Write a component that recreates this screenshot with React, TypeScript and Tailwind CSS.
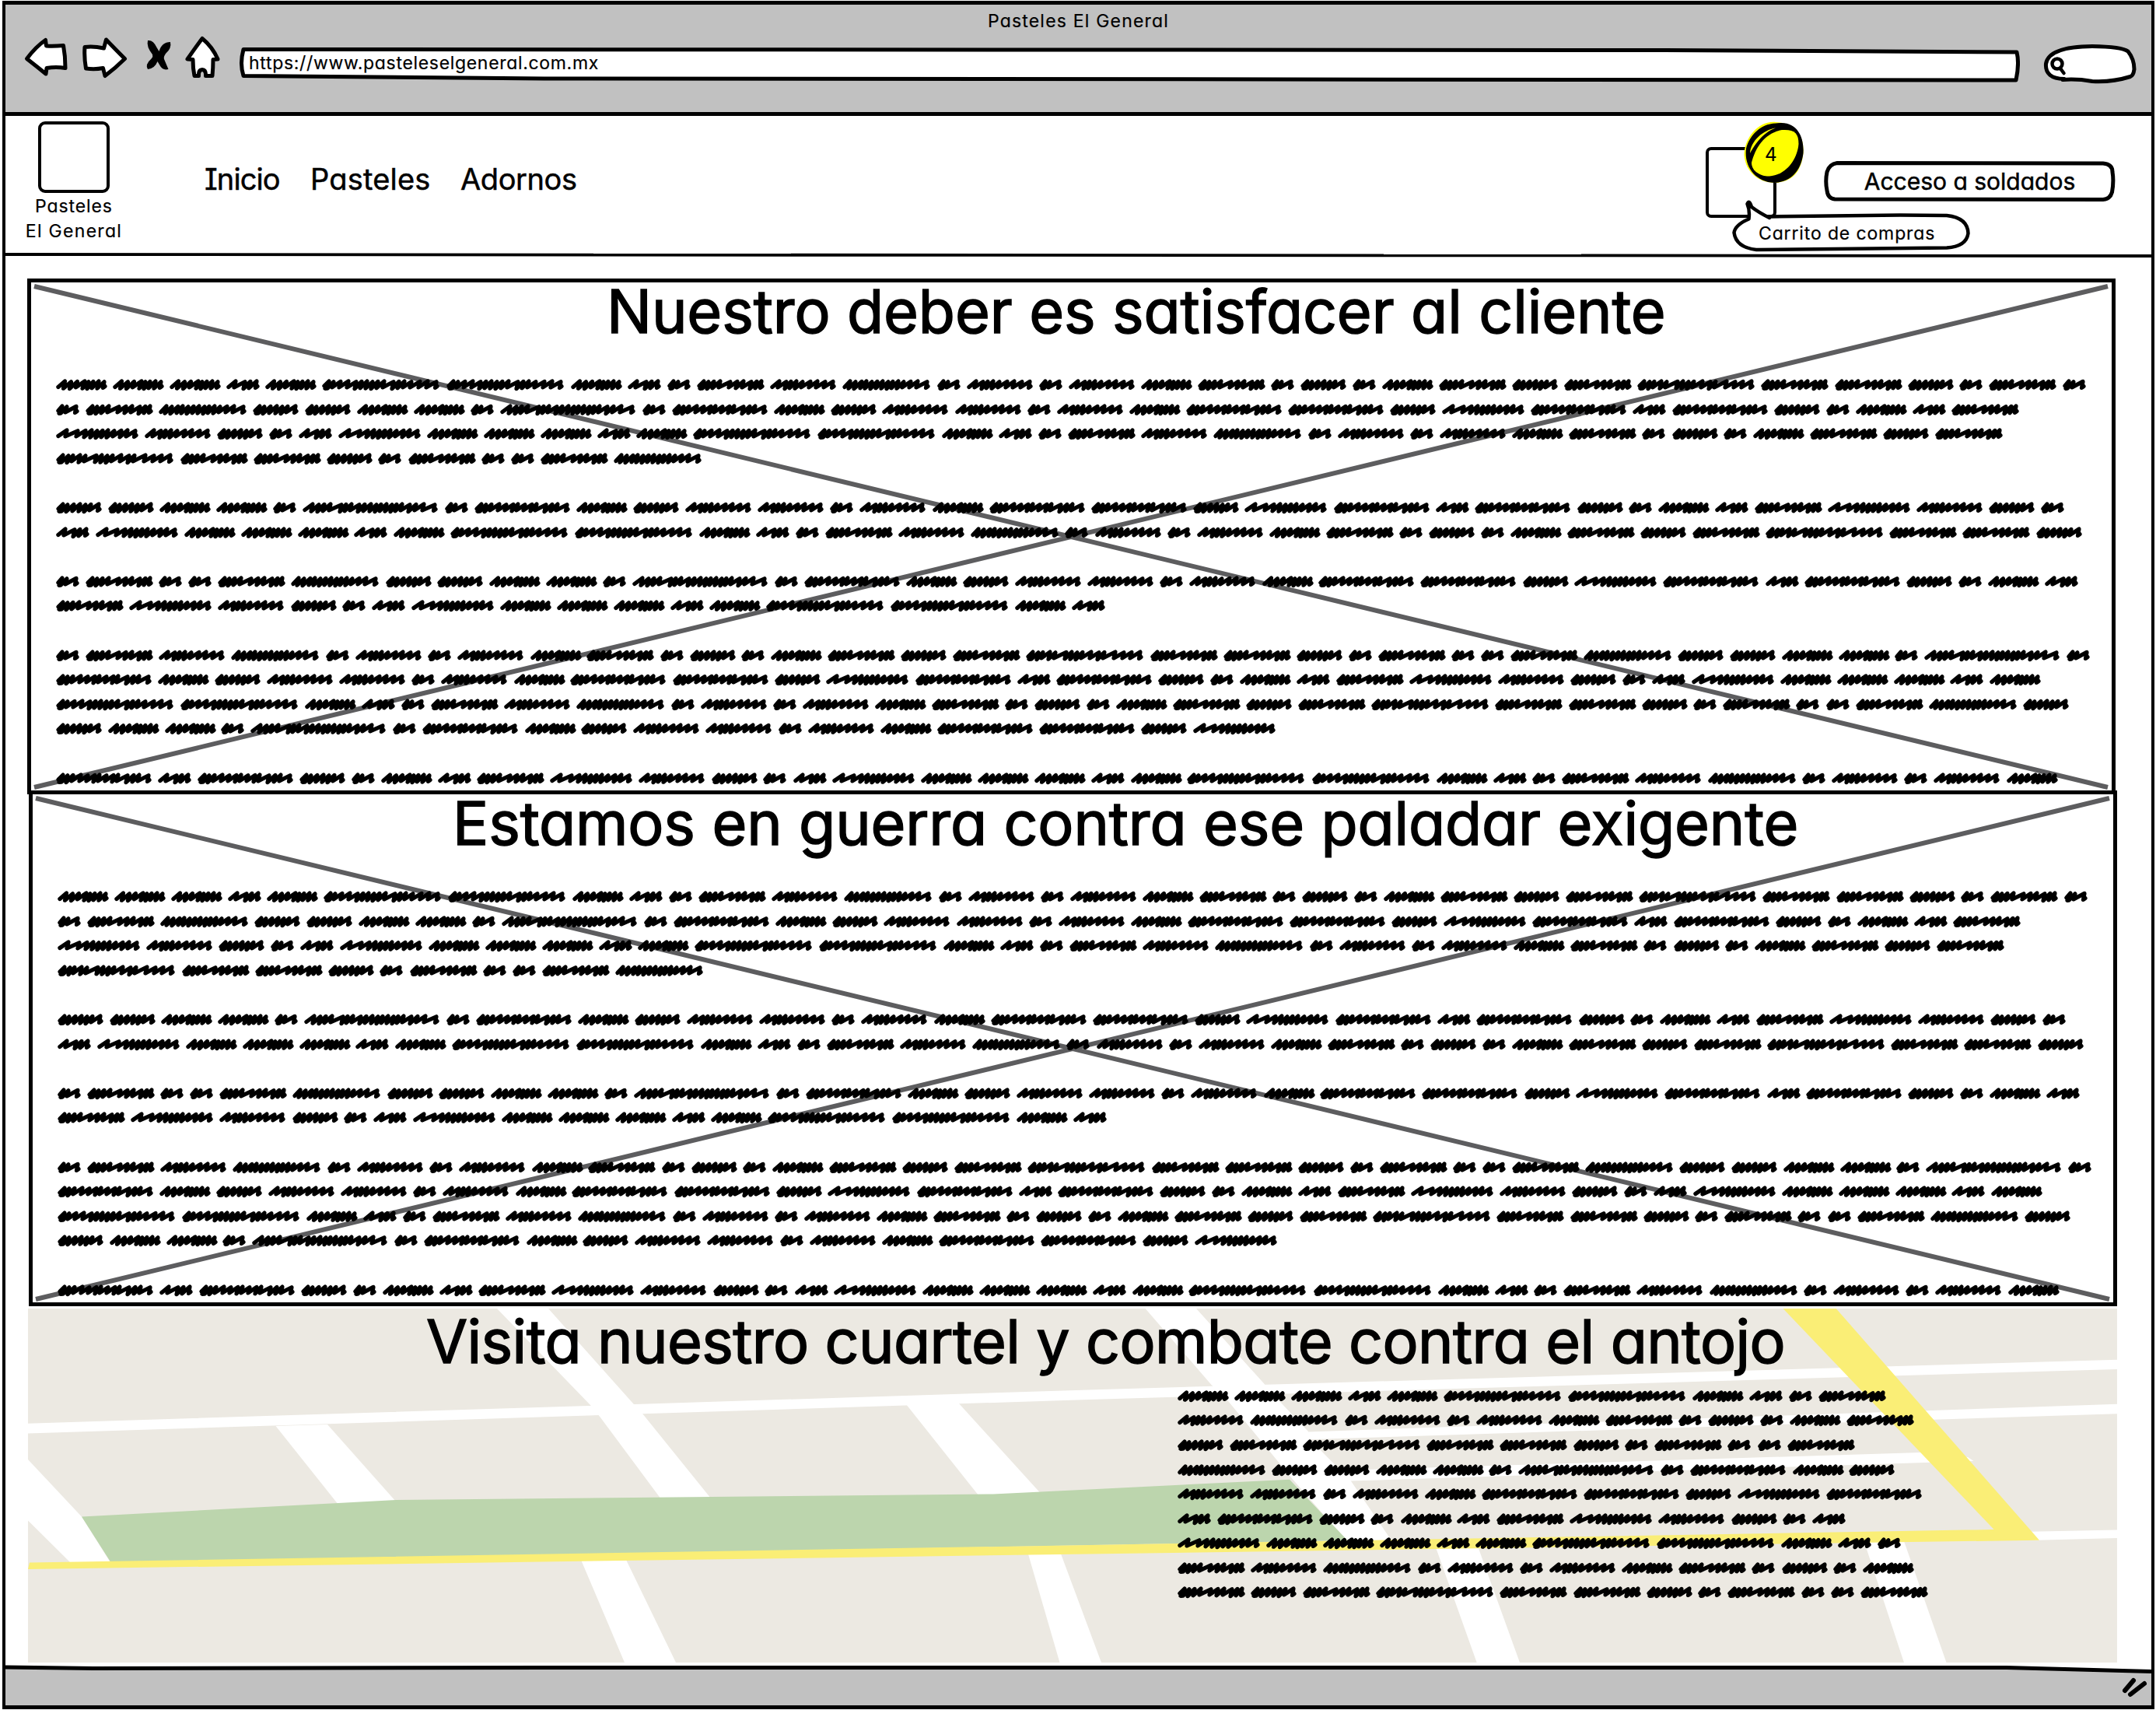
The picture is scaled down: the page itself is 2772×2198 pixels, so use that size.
import React from "react";

const PITCH: Record<number, number> = {
  2: 38.1, 3: 50.7, 4: 66.7, 5: 72.85, 6: 93.3, 7: 94.1, 8: 114.2,
  9: 131.1, 10: 121.3, 11: 160.1, 12: 159.6, 13: 182.9,
};

/* Crest positions of the scribble for each word length. */
const CRESTS: Record<number, number[]> = {
  2: [8, 14, 26],
  3: [12, 24, 31, 39],
  4: [9, 15, 23, 31, 38, 45, 55],
  5: [11.5, 19.5, 27.5, 37, 42, 48, 55, 62],
  6: [12, 21, 27, 34, 42, 52, 61, 71, 81],
  7: [9, 15, 22, 30, 43, 52, 60, 70, 77, 83],
  8: [14, 28, 38, 46, 53, 60, 67, 75, 84, 92, 102],
  9: [9, 15, 22, 32, 41, 50, 56, 65, 74, 80, 92, 100, 107, 119],
  10: [10, 17, 25, 31, 38, 45, 52, 59, 65, 72, 79, 88, 97, 109],
  11: [9, 15, 24, 34, 44, 51, 58, 65, 72, 80, 92, 99, 106, 115, 126, 136, 147],
  12: [9, 16, 22, 31, 38, 52, 59, 66, 73, 84, 94, 101, 115, 126, 136, 147],
  13: [13, 21, 28, 36, 50, 56, 63, 73, 80, 88, 95, 101, 108, 115, 121, 128, 138, 146, 156, 170],
};

function scribble(n: number) {
  const crests = CRESTS[n];
  let d = "";
  crests.forEach((c, i) => {
    const top = 3 + ((i * 5) % 3) * 0.4;
    if (i === 0) {
      d += c < 10 ? `M2.9 9L${c} ${top}L4 12.3` : `M2.9 10.5L${c} ${top}`;
      return;
    }
    const prev = crests[i - 1];
    const gap = c - prev;
    const x = Math.max(Math.min(c - 8, prev - 2), 4);
    const y = gap < 8.5 ? 11.8 + ((i * 7) % 3) * 0.4 : 10.9;
    d += `L${x} ${y}L${c} ${top}`;
  });
  const last = crests[crests.length - 1];
  return d + `L${last - 1.5} 11.4L${last + 1} 9.6`;
}

function Word({ n }: { n: number }) {
  return (
    <svg width={PITCH[n]} height="15" className="block shrink-0 overflow-visible">
      <path d={scribble(n)} fill="none" stroke="#000" strokeWidth="5.2" strokeLinecap="round" strokeLinejoin="round" />
    </svg>
  );
}

function Scribbles({ lines }: { lines: string[] }) {
  return (
    <div className="flex flex-col">
      {lines.map((line, i) => (
        <div key={i} className="flex h-[31.58px] items-center">
          {line.split(" ").filter(Boolean).map((w, j) => <Word key={j} n={Number(w)} />)}
        </div>
      ))}
    </div>
  );
}

const PANEL_LINES = [
  "5 5 5 3 5 11 11 5 3 2 7 6 10 2 6 2 6 5 7 2 4 2 5 7 4 7 12 7 7 4 2 7 2",
  "2 7 10 4 4 5 5 2 13 2 9 5 4 6 6 2 6 5 9 9 4 8 9 3 9 4 2 5 3 7",
  "8 6 4 2 3 8 5 5 5 3 5 11 11 5 3 2 7 6 10 2 6 2 6 5 7 2 4 2 5 7 4 7",
  "12 7 7 4 2 7 2 2 7 10",
  "",
  "4 4 5 5 2 13 2 9 5 4 6 6 2 6 5 9 9 4 8 9 3 9 4 2 5 3 7 8 6 4 2",
  "3 8 5 5 5 3 5 11 11 5 3 2 7 6 10 2 6 2 6 5 7 2 4 2 5 7 4 7 12 7 7 4",
  "",
  "2 7 2 2 7 10 4 4 5 5 2 13 2 9 5 4 6 6 2 6 5 9 9 4 8 9 3 9 4 2 5 3",
  "7 8 6 4 2 3 8 5 5 5 3 5 11 11 5 3",
  "",
  "2 7 6 10 2 6 2 6 5 7 2 4 2 5 7 4 7 12 7 7 4 2 7 2 2 7 10 4 4 5 5 2 13 2",
  "9 5 4 6 6 2 6 5 9 9 4 8 9 3 9 4 2 5 3 7 8 6 4 2 3 8 5 5 5 3 5",
  "11 11 5 3 2 7 6 10 2 6 2 6 5 7 2 4 2 5 7 4 7 12 7 7 4 2 7 2 2 7 10 4",
  "4 5 5 2 13 2 9 5 4 6 6 2 6 5 9 9 4 8",
  "",
  "9 3 9 4 2 5 3 7 8 6 4 2 3 8 5 5 5 3 5 11 11 5 3 2 7 6 10 2 6 2 6 5",
];

const MAP_LINES = [
  "5 5 5 3 5 11 11 5 3 2 7",
  "6 10 2 6 2 6 5 7 2 4 2 5 7",
  "4 7 12 7 7 4 2 7 2 2 7",
  "10 4 4 5 5 2 13 2 9 5 4",
  "6 6 2 6 5 9 9 4 8 9",
  "3 9 4 2 5 3 7 8 6 4 2 3",
  "8 5 5 5 3 5 11 11 5 3 2",
  "7 6 10 2 6 2 6 5 7 2 4 2 5",
  "7 4 7 12 7 7 4 2 7 2 2 7",
];

function BrowserBar() {
  return (
    <header className="flex h-[138px] flex-col bg-[#c1c1c1] [-webkit-text-stroke:0.2px_#000]">
      <div className="flex h-10 justify-center pt-[2px]">
        <span className="text-[23px] leading-[38px] tracking-[1.2px]">Pasteles El General</span>
      </div>
      <div className="flex h-[62px] pl-[23px]">
        <svg viewBox="30 46 60 62" className="h-[62px] w-[60px]" fill="#fff" stroke="#000" strokeWidth="5" strokeLinejoin="round">
          <path d="M34.5 75.5Q46 60 58.500 51.500L59.500 59Q70 59.500 81.500 58.500Q84 72 84 87.500Q72 85.500 60 87.500L59 95Q48 86 34.500 75.500Z" />
        </svg>
        <svg viewBox="104 46 60 62" className="ml-[14px] h-[62px] w-[60px]" fill="#fff" stroke="#000" strokeWidth="5" strokeLinejoin="round">
          <path d="M109 60.500Q120 59 133.500 62L136.500 51Q147 62 160.500 75.500Q149 87 135 97.500L132.500 87.500Q122 89.500 110.500 88Q108 74 109 60.500Z" />
        </svg>
        <svg viewBox="184 46 40 62" className="ml-[20px] h-[62px] w-[40px]">
          <path d="M190 52Q197 51 201.500 61L204.500 66Q208 54 219 54Q221 62 213 69Q210 73 211 76L216.500 89Q209 91 205.500 84L202.500 79Q199 88 190 89Q186 83 195 75Q197 73 196 70Q188 60 190 52Z" />
        </svg>
        <svg viewBox="236 46 50 62" className="ml-[12px] h-[62px] w-[50px]" fill="#fff" stroke="#000" strokeWidth="5" strokeLinejoin="round">
          <path d="M260 49.500Q252 60 241 76L248 76.500Q248 88 250 97.500H255.500Q255 90 260 89.500Q265 90 264.500 97.500H273Q274 87 274 76.500L280 76Q273 60 260 49.500Z" />
        </svg>
        <div className="relative ml-[22px] h-[62px] w-[2289px]">
          <svg viewBox="308 46 2289 62" className="absolute inset-0 h-[62px] w-[2289px]" fill="#fff" stroke="#000" strokeWidth="5" strokeLinejoin="round">
            <path d="M313 63.500L1400 64L2140 64.500L2593 67Q2596.500 82 2592 103L700 101L313 97.500Q308 82 313 63.500Z" />
          </svg>
          <span className="relative ml-[12px] block pt-[20px] text-[23px] leading-[30px] tracking-[0.68px]">https://www.pasteleselgeneral.com.mx</span>
        </div>
        <svg viewBox="2626 46 124 62" className="ml-[29px] h-[62px] w-[124px]" fill="#fff" stroke="#000" strokeWidth="5" strokeLinejoin="round" strokeLinecap="round">
          <path d="M2654 101.500Q2629 101 2630.500 82Q2634 60 2690 59.500Q2728 60 2736 66Q2744 76 2744 89Q2743 97 2739 98.500Q2715 106 2690 104.500Q2670 101 2652 102.500" />
          <ellipse cx="2645" cy="82" rx="6.500" ry="6.500" strokeWidth="4.500" />
          <path d="M2649 88L2653.500 94" strokeWidth="4.500" />
        </svg>
      </div>
    </header>
  );
}

function Cart() {
  return (
    <div className="relative mt-[40px] h-[91px] w-[91px] rounded-[7px] border-4 border-black">
      <svg viewBox="2228 256 310 70" className="absolute left-[29px] top-[63px] h-[70px] w-[310px]" fill="#fff" stroke="#000" strokeWidth="4.500" strokeLinejoin="round">
        <path d="M2277 278.500L2445 276.500L2505 277Q2532 280 2532.500 300Q2530 317 2505 318.500L2260 321Q2234 318 2231.500 299Q2233 289 2250.500 281.500Q2252 270 2248.500 262Q2251 256 2254 266Q2263 273 2277 280Z" />
      </svg>
      <span className="absolute left-[64px] top-[91px] whitespace-nowrap text-[23px] leading-[32px] tracking-[0.86px]">Carrito de compras</span>
      <svg viewBox="2240 154 84 86" className="absolute left-[42px] top-[-40px] h-[86px] w-[84px]">
        <path d="M2284 158C2262 156 2244 178 2243.500 200C2245 222 2262 236 2283 236C2305 235 2317 222 2319.500 198C2321 178 2312 159 2284 158Z" fill="#ff0" />
        <path d="M2284 159.500C2264 160 2250 176 2246 192C2243 215 2258 235 2282 236C2306 235 2317 218 2319.500 198C2321 178 2312 158 2290 159Z" />
        <path d="M2292 168C2270 172 2258 190 2253 210C2253 222 2266 228 2276 227.500C2298 226 2312 205 2313.500 186C2313.500 172 2308 167 2292 168Z" fill="#ff0" />
        <path d="M2284 165.500C2268 168 2252 182 2251 198C2257 188 2266 172 2284 165.500Z" fill="#ff0" />
      </svg>
      <span className="absolute left-[72px] top-[-10px] text-[24px] leading-[32px]">4</span>
    </div>
  );
}

function NavBar() {
  return (
    <nav className="flex h-[176px] items-start pl-[18px] pr-[46px] [-webkit-text-stroke:0.2px_#000]">
      <div className="mt-[7px] flex w-[140px] flex-col items-center text-[23px] leading-[32px]">
        <div className="mb-px h-[92px] w-[92px] rounded-[9px] border-4 border-black" />
        <span className="tracking-[0.9px]">Pasteles</span>
        <span className="tracking-[1.3px]">El General</span>
      </div>
      <div className="ml-[98px] mt-[61px] flex text-[38px] leading-[40px] [-webkit-text-stroke:0.5px_#000]">
        <a className="w-[136px] tracking-[-0.9px]"><span className="[font-feature-settings:'cv08']">I</span>nicio</a>
        <a className="w-[193px] tracking-[0.2px]">Pasteles</a>
        <a className="tracking-[-0.4px]">Adornos</a>
      </div>
      <div className="ml-auto flex">
        <Cart />
        <button className="relative ml-[61px] mt-[58px] h-[52px] w-[375px]">
          <svg viewBox="0 0 374 52" className="absolute inset-0 h-[52px] w-[375px]" fill="#fff" stroke="#000" strokeWidth="5" strokeLinejoin="round" preserveAspectRatio="none">
            <path d="M17 2.500L358 3Q370 4 370 14Q372 26 369.500 40Q367 49 358 49.500L14 49Q5 48 4 38Q1.500 26 4 14Q7 4 17 2.500Z" />
          </svg>
          <span className="relative block text-[30px] leading-[45px] [-webkit-text-stroke:0.5px_#000]">Acceso a soldados</span>
        </button>
      </div>
    </nav>
  );
}

function Cross() {
  return (
    <svg viewBox="0 0 2675 653" className="absolute inset-0 h-[653px] w-[2675px]" stroke="#5d5d5f" strokeWidth="6">
      <path d="M4 5L2670 649M4 649L2670 5" />
    </svg>
  );
}

function Panel({ children, className }: { children: React.ReactNode; className: string }) {
  return (
    <section className={`relative h-[663px] w-[2685px] shrink-0 border-[5px] border-black ${className}`}>
      <Cross />
      <div className="relative">
        {children}
        <div className="mt-[42px] pl-[32px]">
          <Scribbles lines={PANEL_LINES} />
        </div>
      </div>
    </section>
  );
}

function StreetMap() {
  return (
    <svg viewBox="36 1682 2686 455" className="absolute inset-0 h-[455px] w-[2686px]">
      <rect x="36" y="1682" width="2686" height="455" fill="#ece9e2" />
      <g fill="#fff">
        <path d="M36 1829.700L1400 1786.500L2722 1747.700V1760L1400 1799L36 1842.500Z" />
        <path d="M1665 1841L1682 1840.400L2722 1804.700V1817.200L1682 1850.300L1665 1851Z" />
        <path d="M1690 1891L2469 1867L2530 1873L2537.500 1878L1737 1903.500L1690 1905Z" />
        <path d="M639 1682H705L814 1804L826 1817L914 1926L850 1927L772 1822L759 1806Z" />
        <path d="M354.500 1833L421 1831L509 1930L435 1934Z" />
        <path d="M1165 1805L1232 1803L1337.500 1919L1258 1922Z" />
        <path d="M36 1876L105 1949.400L143 2010H92L36 1954.400Z" />
        <path d="M1472.600 1682H1538L1625.700 1779L1636 1791.500L1682 1840L1684 1850L1737 1903.800L1789 1980H1730.700L1662.500 1902L1575 1796L1557.500 1780Z" />
        <path d="M747 2005H805L869 2137H803Z" />
        <path d="M1321.500 1996H1363.500L1416 2137H1362.500Z" />
        <path d="M1846 1989H1900.500L1954 2137H1898.700Z" />
        <path d="M2396.600 1981H2448L2502.500 2137H2448Z" />
        <path d="M2610 1968.700L2722 1966.600V1977L2610 1980Z" />
      </g>
      <path d="M105 1949.400L435 1932L509 1928L1277 1920.500L1400 1914.500L1658 1901.700L1732.500 1980L143 2009Z" fill="#bcd5ad" />
      <path d="M38 2008.600L1400 1986L2563.700 1966L2292.500 1682H2360.700L2622 1979.700L1400 1997.500L36 2017Z" fill="#faee76" />
    </svg>
  );
}

const HEADING = "flex h-[74px] whitespace-nowrap text-[77px] leading-[75px] [-webkit-text-stroke:1.5px_#000]";

export default function App() {
  return (
    <div className="flex h-[2198px] w-[2772px] overflow-hidden bg-white pl-[3px] pt-px font-['Inter',sans-serif] text-black [font-feature-settings:'cv11']">
      <div className="flex h-[2196px] w-[2767px] flex-col border-x-4 border-y-[5px] border-black">
        <BrowserBar />
        <div className="h-[5px] shrink-0 bg-black" />
        <NavBar />
        <svg viewBox="0 0 2759 6" className="block h-[6px] w-[2759px] shrink-0">
          <path d="M0 2L2759 4" stroke="#000" strokeWidth="3.800" />
        </svg>
        <main className="flex h-[1809px] shrink-0 flex-col pt-[27px]">
          <Panel className="ml-[28px]">
            <h1 className={`${HEADING} pl-[740px] tracking-[-0.1px]`}>Nuestro deber es satisfacer al cliente</h1>
          </Panel>
          <Panel className="-mt-[5px] ml-[30px]">
            <h1 className={`${HEADING} pl-[540px] tracking-[-0.13px]`}>Estamos en guerra contra ese paladar exigente</h1>
          </Panel>
          <section className="relative ml-[29px] mt-[3px] h-[455px] w-[2686px] shrink-0">
            <StreetMap />
            <div className="relative pt-[5px]">
              <h1 className={`${HEADING} pl-[512px] tracking-[-0.6px]`}>Visita nuestro cuartel y combate contra el antojo</h1>
              <div className="ml-[1478px] mt-[17.500px]">
                <Scribbles lines={MAP_LINES} />
              </div>
            </div>
          </section>
        </main>
        <footer className="relative flex h-[52px] shrink-0 items-center justify-end">
          <svg viewBox="7 2140 2759 52" className="absolute inset-0 h-[52px] w-[2759px]">
            <path d="M7 2143.500L400 2144L2580 2143.500L2766 2148.500V2192H7Z" fill="#c1c1c1" />
            <path d="M7 2143L120 2144.500L700 2143.500L2580 2143.500L2766 2148.500" fill="none" stroke="#000" strokeWidth="5" />
          </svg>
          <svg viewBox="2728 2159 34 29" className="relative mr-[4px] mt-[5px] h-[29px] w-[34px]" stroke="#000" strokeWidth="6" strokeLinecap="round">
            <path d="M2732 2178L2743 2165M2739 2183L2757 2169" />
          </svg>
        </footer>
      </div>
    </div>
  );
}
